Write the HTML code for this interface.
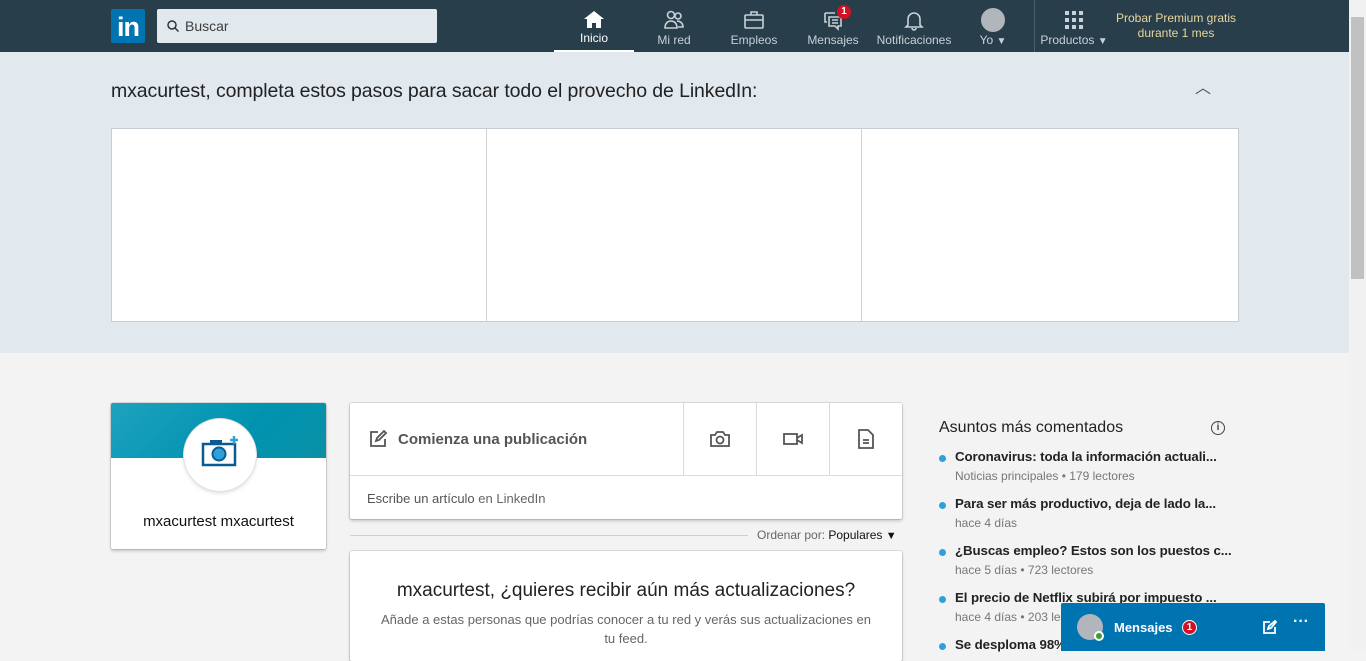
<!DOCTYPE html>
<html><head><meta charset="utf-8"><style>
*{box-sizing:border-box;margin:0;padding:0}
body{width:1366px;height:651px;overflow:hidden;font-family:"Liberation Sans",sans-serif;background:#f3f3f3;position:relative}
.nav{position:absolute;left:0;top:0;width:1349px;height:52px;background:#283e4a}
.logo{position:absolute;left:111px;top:9px;width:34px;height:34px;background:#0073b1;border-radius:2px;color:#fff;font-weight:bold;font-size:27px;line-height:36px;text-align:center;letter-spacing:-1px}
.search{position:absolute;left:157px;top:9px;width:280px;height:34px;background:#e1e9ee;border-radius:2px;font-size:14px;color:#3d3d3d;line-height:34px;padding-left:28px}
.search svg{position:absolute;left:10px;top:11px}
.ni{position:absolute;top:0;height:52px;text-align:center;color:#c7d1d8;font-size:12px}
.ni svg{position:absolute;top:9px;left:50%;margin-left:-11px}
.ni span{position:absolute;bottom:5px;left:0;right:0;white-space:nowrap}
.top{position:absolute;left:0;top:52px;width:1349px;height:301px;background:#e1e8ee}
.top h2{position:absolute;left:111px;top:28px;font-size:19.5px;font-weight:normal;color:#222;letter-spacing:-0.1px}
.cards{position:absolute;left:111px;top:76px;width:1128px;height:194px;background:#fff;border:1px solid #c6ced3}
.cards div{position:absolute;top:0;height:192px;border-left:1px solid #d0d0d0}
.scroll{position:absolute;right:0;top:0;width:17px;height:651px;background:#f1f1f1}
.thumb{position:absolute;left:2px;top:17px;width:13px;height:262px;background:#c1c1c1}
.box{position:absolute;background:#fff;border-radius:2px;box-shadow:0 0 0 1px rgba(0,0,0,.1),0 2px 3px rgba(0,0,0,.2)}
.trend{position:absolute;left:939px;font-size:14px}
.trend b{display:block;font-weight:bold;color:#222;font-size:13.3px;letter-spacing:-0.1px;white-space:nowrap}
.trend i{display:block;font-style:normal;color:#777;font-size:12px;margin-top:5px;white-space:nowrap}
.trend:before{content:"";position:absolute;left:0;top:6px;width:7px;height:7px;border-radius:50%;background:#2ea1d9}
.trend b,.trend i{margin-left:16px}
</style></head><body>
<div class="nav">
<div class="logo">in</div>
<div class="search"><svg width="12" height="12" viewBox="0 0 12 12"><circle cx="5" cy="5" r="4" fill="none" stroke="#333" stroke-width="1.5"/><path d="M8 8l3.5 3.5" stroke="#333" stroke-width="1.5"/></svg>Buscar</div>
<div class="ni" style="left:554px;width:80px;color:#fff;border-bottom:2px solid #fff"><svg width="22" height="22" viewBox="0 0 22 22"><path d="M11 2L1 10h3v9h5v-5h4v5h5v-9h3z" fill="#fff"/></svg><span>Inicio</span></div>
<div class="ni" style="left:644px;width:60px"><svg width="22" height="22" viewBox="0 0 22 22" fill="none" stroke="#c7d1d8" stroke-width="1.6"><circle cx="8" cy="6" r="3.5"/><circle cx="15" cy="7" r="3"/><path d="M2 19c0-5 3-7 6-7s6 2 6 7zM14 12c3 0 6 2 6 6h-5"/></svg><span>Mi red</span></div>
<div class="ni" style="left:724px;width:60px"><svg width="22" height="22" viewBox="0 0 22 22" fill="none" stroke="#c7d1d8" stroke-width="1.6"><rect x="2" y="6" width="18" height="13" rx="1"/><path d="M8 6V3h6v3M2 11h18"/></svg><span>Empleos</span></div>
<div class="ni" style="left:803px;width:60px"><svg width="22" height="22" viewBox="0 0 22 22" fill="none" stroke="#c7d1d8" stroke-width="1.6"><path d="M3 4h10M3 4v9h2M7 8h12v9h-3v3l-3-3H7z M10 11h6M10 14h6"/></svg><span>Mensajes</span><div style="position:absolute;left:34px;top:5px;width:14px;height:14px;border-radius:50%;background:#d11124;color:#fff;font-size:10px;font-weight:bold;line-height:14px">1</div></div>
<div class="ni" style="left:874px;width:80px"><svg width="22" height="22" viewBox="0 0 22 22" fill="none" stroke="#c7d1d8" stroke-width="1.6"><path d="M5 16V10a6 6 0 0 1 12 0v6l2 2H3zM9 19a2 2 0 0 0 4 0"/></svg><span>Notificaciones</span></div>
<div class="ni" style="left:972px;width:42px"><div style="position:absolute;left:9px;top:8px;width:24px;height:24px;border-radius:50%;background:#b0b6bb"></div><span>Yo <span style="position:static;font-size:10px">▼</span></span></div>
<div style="position:absolute;left:1034px;top:0;width:1px;height:52px;background:#4a5f6b"></div>
<div class="ni" style="left:1036px;width:76px"><svg width="22" height="22" viewBox="0 0 22 22" fill="#c7d1d8"><rect x="2" y="2" width="4" height="4"/><rect x="9" y="2" width="4" height="4"/><rect x="16" y="2" width="4" height="4"/><rect x="2" y="9" width="4" height="4"/><rect x="9" y="9" width="4" height="4"/><rect x="16" y="9" width="4" height="4"/><rect x="2" y="16" width="4" height="4"/><rect x="9" y="16" width="4" height="4"/><rect x="16" y="16" width="4" height="4"/></svg><span>Productos <span style="position:static;font-size:10px">▼</span></span></div>
<div style="position:absolute;left:1110px;top:11px;width:132px;text-align:center;color:#e8d69f;font-size:12px;line-height:15px">Probar Premium gratis<br>durante 1 mes</div>
</div>
<div class="top">
<h2>mxacurtest, completa estos pasos para sacar todo el provecho de LinkedIn:</h2>
<div style="position:absolute;left:1195px;top:22px;color:#555;font-size:16px">︿</div>
<div class="cards"><div style="left:374px"></div><div style="left:749px"></div></div>
</div>
<div class="box" style="left:111px;top:403px;width:215px;height:146px;overflow:hidden">
<div style="height:55px;background:linear-gradient(135deg,#1ea2be,#0093b0 60%,#0a90a6)"></div>
<div style="position:absolute;left:73px;top:16px;width:72px;height:72px;border-radius:50%;background:#fff;box-shadow:0 0 0 1px #e0e0e0,0 2px 4px rgba(0,0,0,.15)">
<svg width="40" height="36" viewBox="0 0 40 36" style="position:absolute;left:16px;top:16px"><rect x="3" y="9" width="32" height="21" fill="#fff" stroke="#0b5a91" stroke-width="2.5"/><rect x="10" y="5" width="12" height="5" fill="#0b5a91"/><circle cx="19" cy="19" r="6.5" fill="#2ea1d9" stroke="#0b5a91" stroke-width="2"/><path d="M34 1v8M30 5h8" stroke="#2ea1d9" stroke-width="2.5"/></svg></div>
<div style="position:absolute;top:110px;width:100%;text-align:center;font-size:15px;color:#111">mxacurtest mxacurtest</div>
</div>
<div class="box" style="left:350px;top:403px;width:552px;height:116px">
<svg width="20" height="20" viewBox="0 0 20 20" style="position:absolute;left:18px;top:26px" fill="none" stroke="#555" stroke-width="1.8"><path d="M10 3H3v14h14v-7"/><path d="M8 12l1-3 7-7 2 2-7 7z"/></svg>
<div style="position:absolute;left:48px;top:28px;font-size:15px;font-weight:bold;color:#555">Comienza una publicación</div>
<div style="position:absolute;left:333px;top:0;width:1px;height:72px;background:#dcdcdc"></div>
<div style="position:absolute;left:406px;top:0;width:1px;height:72px;background:#dcdcdc"></div>
<div style="position:absolute;left:479px;top:0;width:1px;height:72px;background:#dcdcdc"></div>
<div style="position:absolute;left:0;top:72px;width:100%;height:1px;background:#dcdcdc"></div>
<svg width="20" height="16" viewBox="0 0 20 16" style="position:absolute;left:360px;top:28px" fill="none" stroke="#555" stroke-width="1.8"><path d="M1 4h4l2-3h6l2 3h4v11H1z"/><circle cx="10" cy="9" r="3.5"/></svg>
<svg width="20" height="14" viewBox="0 0 20 14" style="position:absolute;left:433px;top:29px" fill="none" stroke="#555" stroke-width="1.8"><rect x="1" y="2" width="13" height="10"/><path d="M14 6l5-3v8l-5-3"/></svg>
<svg width="16" height="20" viewBox="0 0 16 20" style="position:absolute;left:508px;top:26px" fill="none" stroke="#555" stroke-width="1.8"><path d="M1 1h9l5 5v13H1z M5 11h6M5 14h6"/></svg>
<div style="position:absolute;left:17px;top:88px;font-size:13px;color:#555">Escribe un artículo <span style="color:#666">en LinkedIn</span></div>
</div>
<div style="position:absolute;left:350px;top:535px;width:398px;height:1px;background:#d0d0d0"></div>
<div style="position:absolute;left:757px;top:528px;font-size:12px;color:#666">Ordenar por: <span style="color:#111">Populares</span> <span style="font-size:11px;color:#111">▼</span></div>
<div class="box" style="left:350px;top:551px;width:552px;height:110px;text-align:center">
<div style="margin-top:29px;font-size:19px;color:#222">mxacurtest, ¿quieres recibir aún más actualizaciones?</div>
<div style="margin-top:8px;font-size:13px;color:#666;line-height:19px;padding:0 25px">Añade a estas personas que podrías conocer a tu red y verás sus actualizaciones en tu feed.</div>
</div>
<div style="position:absolute;left:939px;top:419px;font-size:16px;color:#222">Asuntos más comentados</div>
<div style="position:absolute;left:1211px;top:421px;width:14px;height:14px;border:1.5px solid #444;border-radius:50%;font-size:10px;font-weight:bold;text-align:center;line-height:11px;color:#444">i</div>
<div class="trend" style="top:449px"><b>Coronavirus: toda la información actuali...</b><i>Noticias principales • 179 lectores</i></div>
<div class="trend" style="top:496px"><b>Para ser más productivo, deja de lado la...</b><i>hace 4 días</i></div>
<div class="trend" style="top:543px"><b>¿Buscas empleo? Estos son los puestos c...</b><i>hace 5 días • 723 lectores</i></div>
<div class="trend" style="top:590px"><b>El precio de Netflix subirá por impuesto ...</b><i>hace 4 días • 203 lectores</i></div>
<div class="trend" style="top:637px"><b>Se desploma 98% ...</b></div>
<div style="position:absolute;left:1061px;top:603px;width:264px;height:48px;background:#0073b1;border-radius:2px 2px 0 0">
<div style="position:absolute;left:16px;top:11px;width:26px;height:26px;border-radius:50%;background:#b0b6bb"></div>
<div style="position:absolute;left:33px;top:28px;width:10px;height:10px;border-radius:50%;background:#3d9f2c;border:2px solid #fff"></div>
<div style="position:absolute;left:53px;top:17px;color:#fff;font-weight:bold;font-size:13px">Mensajes</div>
<div style="position:absolute;left:121px;top:17px;width:15px;height:15px;border-radius:50%;background:#d11124;border:1px solid #fff;color:#fff;font-size:10px;font-weight:bold;text-align:center;line-height:13px">1</div>
<svg width="14" height="14" viewBox="0 0 14 14" style="position:absolute;left:202px;top:17px" fill="none" stroke="#fff" stroke-width="1.8"><path d="M7 2H1v11h11V7M5 9l1-3 6-5 1 1-5 6z"/></svg>
<div style="position:absolute;left:232px;top:10px;color:#fff;font-size:16px;font-weight:bold">···</div>
</div>
<div class="scroll"><div class="thumb"></div></div>
</body></html>
